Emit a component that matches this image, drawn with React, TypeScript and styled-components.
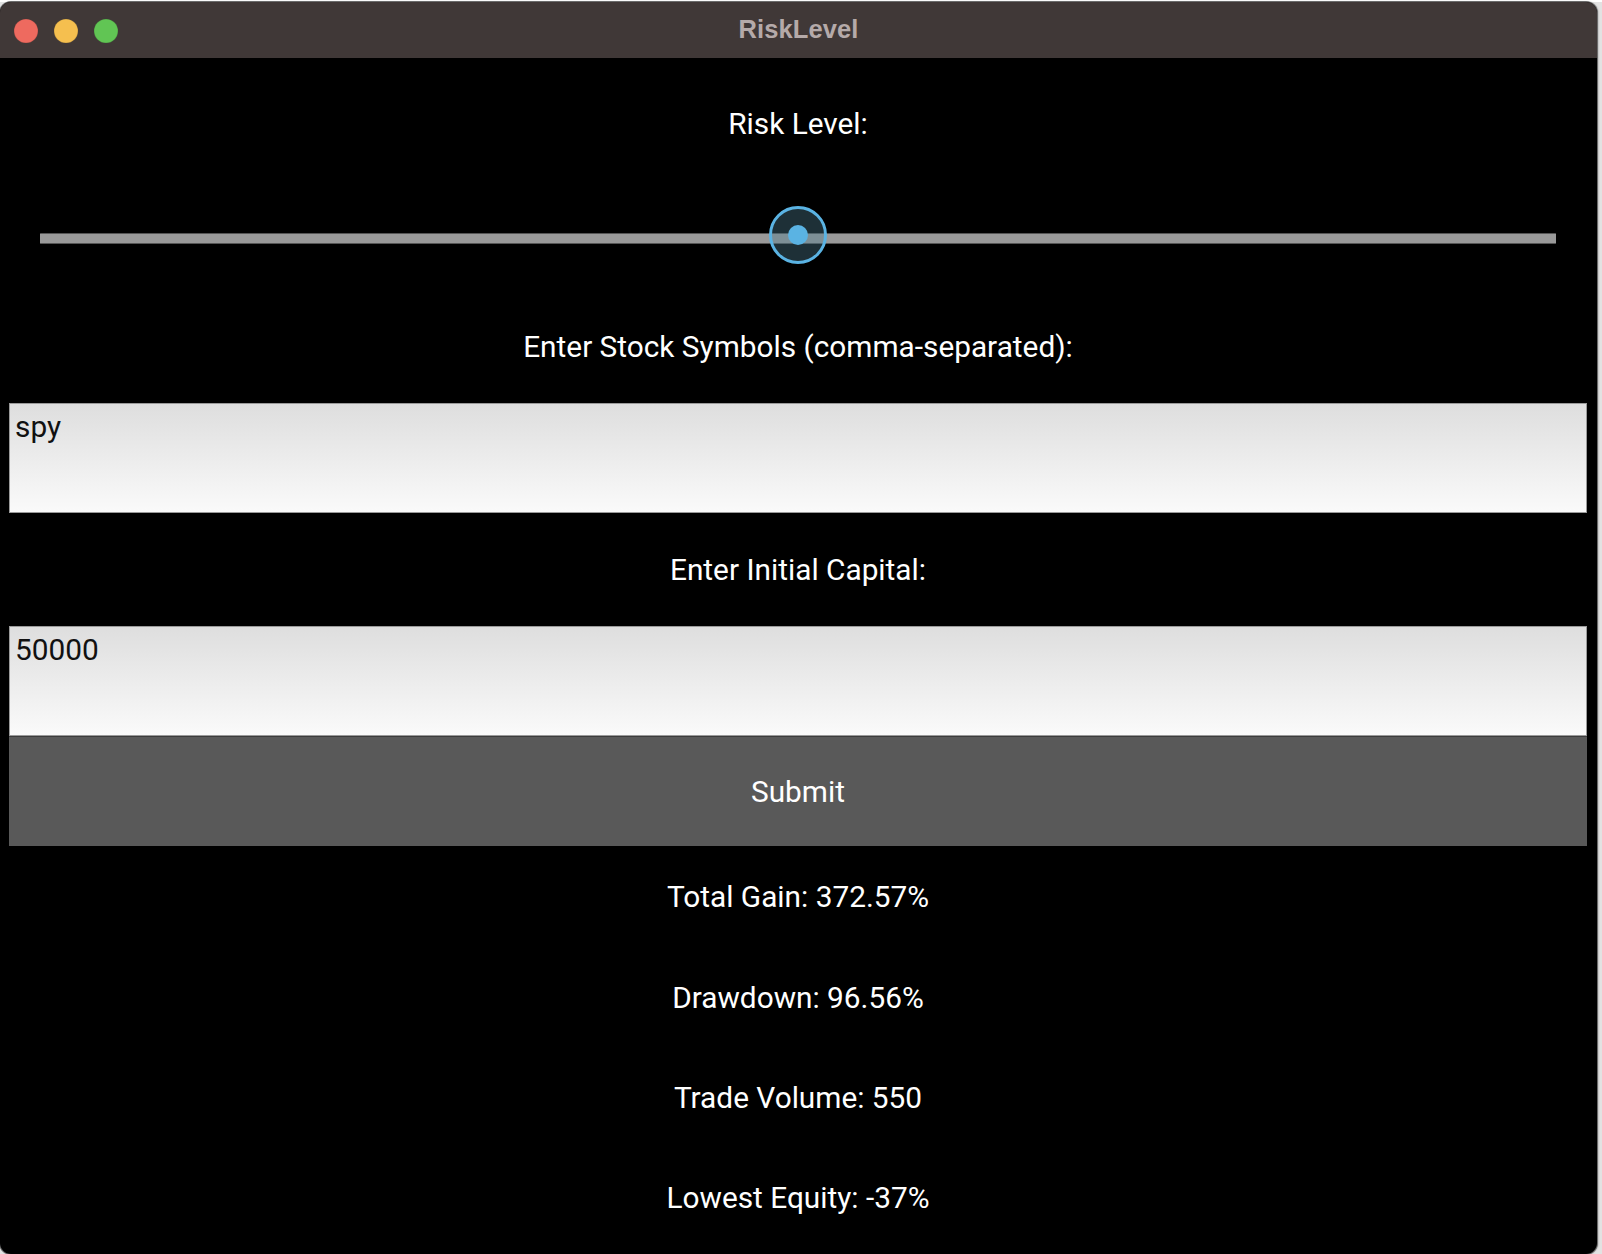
import React from "react";
import styled, { createGlobalStyle } from "styled-components";

const GlobalStyle = createGlobalStyle`
  html, body {
    margin: 0;
    padding: 0;
    background: #e4e4e4;
    overflow: hidden;
  }
  * { box-sizing: border-box; }
`;

const Page = styled.div`
  width: 1602px;
  height: 1254px;
  padding-top: 2px;
  background: linear-gradient(to bottom, #ffffff 0, #ffffff 2px, #e2e2e2 2px);
`;

const Window = styled.div`
  width: 1597px;
  height: 1252px;
  border-radius: 11px;
  overflow: hidden;
  background: #000;
  box-shadow: 0 0 0 1px #6b6b6b, 1px 0 2px rgba(0, 0, 0, 0.4);
  display: flex;
  flex-direction: column;
`;

const TitleBar = styled.div`
  height: 56px;
  flex: none;
  background: #403837;
  display: grid;
  grid-template-columns: 1fr auto 1fr;
  align-items: center;
`;

const Lights = styled.div`
  display: flex;
  gap: 16px;
  padding-left: 14px;
  padding-top: 1px;
`;

const Light = styled.span<{ $c: string }>`
  width: 24px;
  height: 24px;
  border-radius: 50%;
  background: ${(p) => p.$c};
  box-shadow: inset 0 0 0 0.5px rgba(0, 0, 0, 0.15);
`;

const Title = styled.div`
  font-family: "Liberation Sans", Arial, sans-serif;
  font-weight: 700;
  font-size: 25.5px;
  color: #b5aaa9;
  letter-spacing: 0.1px;
  margin-top: -1px;
`;

const Content = styled.div`
  flex: 1;
  display: flex;
  flex-direction: column;
  padding: 10px 10px 0 9px;
`;

const Label = styled.div<{ $h: number }>`
  height: ${(p) => p.$h}px;
  flex: none;
  display: flex;
  align-items: center;
  justify-content: center;
  font-family: Roboto, "Noto Sans", sans-serif;
  font-size: 29.8px;
  color: #ffffff;
`;

const SliderRow = styled.div`
  height: 111px;
  flex: none;
  display: flex;
  align-items: center;
  padding: 0 31px;
`;

const Track = styled.div`
  position: relative;
  width: 100%;
  height: 11px;
  margin-top: 7px;
  background: #999999;
  border-top: 1.5px solid #555;
  border-bottom: 1.5px solid #555;
  border-radius: 1px;
`;

const Thumb = styled.div`
  position: absolute;
  top: -28px;
  width: 58px;
  height: 58px;
  margin-left: -29px;
  border-radius: 50%;
  border: 3px solid #5ab3e3;
  background: rgba(80, 125, 145, 0.38);
  display: flex;
  align-items: center;
  justify-content: center;
`;

const Dot = styled.div`
  width: 20px;
  height: 20px;
  border-radius: 50%;
  background: #5ab3e3;
`;

const Field = styled.textarea`
  height: 110px;
  flex: none;
  width: 100%;
  resize: none;
  overflow: hidden;
  border: 1px solid #9a9a9a;
  border-radius: 0;
  margin: 0;
  padding: 6px 5px;
  background: linear-gradient(to bottom, #dedede, #fafafa);
  font-family: Roboto, "Noto Sans", sans-serif;
  font-size: 29.8px;
  line-height: 1.15;
  color: #111;
  outline: none;
  display: block;
`;

const SubmitButton = styled.button`
  height: 110px;
  flex: none;
  width: 100%;
  border: none;
  border-top: 1px solid #3c3c3c;
  margin: 0;
  background: #595959;
  color: #ffffff;
  font-family: Roboto, "Noto Sans", sans-serif;
  font-size: 29.8px;
  cursor: pointer;
`;

const results = [
  { text: "Total Gain: 372.57%", h: 101 },
  { text: "Drawdown: 96.56%", h: 100 },
  { text: "Trade Volume: 550", h: 100 },
  { text: "Lowest Equity: -37%", h: 100 },
];

export default function App() {
  const risk = 50;
  return (
    <>
      <GlobalStyle />
      <Page>
        <Window>
          <TitleBar>
            <Lights>
              <Light $c="#ee6a5f" />
              <Light $c="#f5bf4f" />
              <Light $c="#61c554" />
            </Lights>
            <Title>RiskLevel</Title>
            <div />
          </TitleBar>
          <Content>
            <Label $h={111}>Risk Level:</Label>
            <SliderRow>
              <Track>
                <Thumb style={{ left: `${risk}%` }}>
                  <Dot />
                </Thumb>
              </Track>
            </SliderRow>
            <Label $h={113}>Enter Stock Symbols (comma-separated):</Label>
            <Field defaultValue="spy" spellCheck={false} />
            <Label $h={113}>Enter Initial Capital:</Label>
            <Field defaultValue="50000" spellCheck={false} />
            <SubmitButton>Submit</SubmitButton>
            {results.map((r) => (
              <Label key={r.text} $h={r.h}>
                {r.text}
              </Label>
            ))}
          </Content>
        </Window>
      </Page>
    </>
  );
}
